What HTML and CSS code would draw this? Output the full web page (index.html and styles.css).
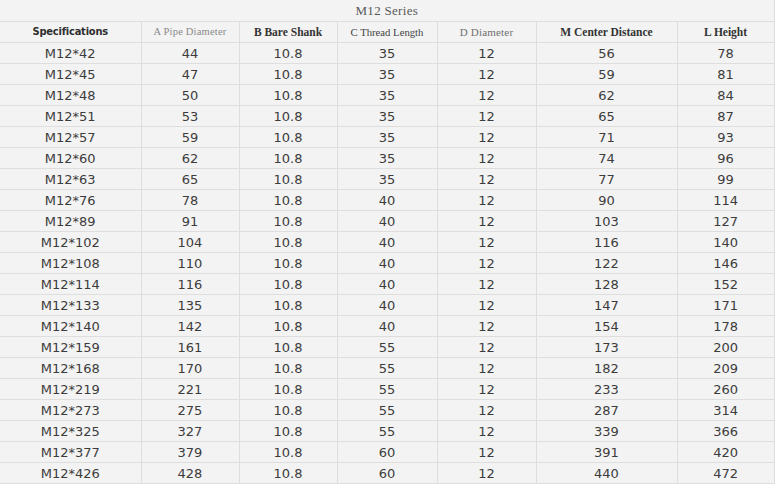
FILE: index.html
```html
<!DOCTYPE html>
<html>
<head>
<meta charset="utf-8">
<link rel="stylesheet" href="styles.css">
</head>
<body>
<table class="spec">
  <colgroup>
    <col class="c1"><col class="c2"><col class="c3"><col class="c4"><col class="c5"><col class="c6"><col class="c7">
  </colgroup>
  <thead>
    <tr class="title-row"><th colspan="7" class="title">M12 Series</th></tr>
    <tr class="head-row">
      <th class="h-spec">Specifications</th>
      <th class="h-light">A Pipe Diameter</th>
      <th class="h-bold">B Bare Shank</th>
      <th class="h-mid">C Thread Length</th>
      <th class="h-light h-d">D Diameter</th>
      <th class="h-bold">M Center Distance</th>
      <th class="h-bold">L Height</th>
    </tr>
  </thead>
  <tbody>
    <tr><td>M12*42</td><td>44</td><td>10.8</td><td>35</td><td>12</td><td>56</td><td>78</td></tr>
    <tr><td>M12*45</td><td>47</td><td>10.8</td><td>35</td><td>12</td><td>59</td><td>81</td></tr>
    <tr><td>M12*48</td><td>50</td><td>10.8</td><td>35</td><td>12</td><td>62</td><td>84</td></tr>
    <tr><td>M12*51</td><td>53</td><td>10.8</td><td>35</td><td>12</td><td>65</td><td>87</td></tr>
    <tr><td>M12*57</td><td>59</td><td>10.8</td><td>35</td><td>12</td><td>71</td><td>93</td></tr>
    <tr><td>M12*60</td><td>62</td><td>10.8</td><td>35</td><td>12</td><td>74</td><td>96</td></tr>
    <tr><td>M12*63</td><td>65</td><td>10.8</td><td>35</td><td>12</td><td>77</td><td>99</td></tr>
    <tr><td>M12*76</td><td>78</td><td>10.8</td><td>40</td><td>12</td><td>90</td><td>114</td></tr>
    <tr><td>M12*89</td><td>91</td><td>10.8</td><td>40</td><td>12</td><td>103</td><td>127</td></tr>
    <tr><td>M12*102</td><td>104</td><td>10.8</td><td>40</td><td>12</td><td>116</td><td>140</td></tr>
    <tr><td>M12*108</td><td>110</td><td>10.8</td><td>40</td><td>12</td><td>122</td><td>146</td></tr>
    <tr><td>M12*114</td><td>116</td><td>10.8</td><td>40</td><td>12</td><td>128</td><td>152</td></tr>
    <tr><td>M12*133</td><td>135</td><td>10.8</td><td>40</td><td>12</td><td>147</td><td>171</td></tr>
    <tr><td>M12*140</td><td>142</td><td>10.8</td><td>40</td><td>12</td><td>154</td><td>178</td></tr>
    <tr><td>M12*159</td><td>161</td><td>10.8</td><td>55</td><td>12</td><td>173</td><td>200</td></tr>
    <tr><td>M12*168</td><td>170</td><td>10.8</td><td>55</td><td>12</td><td>182</td><td>209</td></tr>
    <tr><td>M12*219</td><td>221</td><td>10.8</td><td>55</td><td>12</td><td>233</td><td>260</td></tr>
    <tr><td>M12*273</td><td>275</td><td>10.8</td><td>55</td><td>12</td><td>287</td><td>314</td></tr>
    <tr><td>M12*325</td><td>327</td><td>10.8</td><td>55</td><td>12</td><td>339</td><td>366</td></tr>
    <tr><td>M12*377</td><td>379</td><td>10.8</td><td>60</td><td>12</td><td>391</td><td>420</td></tr>
    <tr><td>M12*426</td><td>428</td><td>10.8</td><td>60</td><td>12</td><td>440</td><td>472</td></tr>
  </tbody>
</table>
</body>
</html>
```
FILE: styles.css
```css
html, body {
  margin: 0;
  padding: 0;
  background: #ffffff;
}
.spec {
  border-collapse: collapse;
  table-layout: fixed;
  width: 774px;
  background: #f3f3f3;
  font-family: "DejaVu Sans", Verdana, sans-serif;
  font-size: 13px;
  color: #3c3c3c;
}
.c1 { width: 141px; }
.c2 { width: 98px; }
.c3 { width: 98px; }
.c4 { width: 100px; }
.c5 { width: 99px; }
.c6 { width: 141px; }
.c7 { width: 97px; }
.spec th, .spec td {
  border: 1px solid #dedede;
  padding: 0;
  height: 20px;
  text-align: center;
  vertical-align: middle;
  line-height: 20px;
  overflow: hidden;
  white-space: nowrap;
}
.spec tr > :first-child { border-left: none; }
.spec .title-row th { border-top: none; height: 21px; line-height: 21px; }
.spec td { padding-top: 1px; height: 19px; line-height: 19px; }
.title {
  font-family: "Liberation Serif", "DejaVu Serif", serif;
  font-weight: normal;
  font-size: 13px;
  letter-spacing: 0.3px;
  color: #5a5a5a;
  padding-left: 24px;
}
.h-spec {
  font-family: "DejaVu Sans Condensed", "DejaVu Sans", sans-serif;
  font-weight: bold;
  font-size: 11px;
  color: #2e2e2e;
  letter-spacing: -0.2px;
}
.h-light {
  font-family: "Liberation Serif", serif;
  font-weight: normal;
  font-size: 10.5px;
  letter-spacing: 0.2px;
  color: #8a8a8a;
}
.h-d {
  font-size: 11px;
  color: #707070;
}
.h-mid {
  font-family: "Liberation Serif", serif;
  font-weight: normal;
  font-size: 10.7px;
  color: #444444;
}
.h-bold {
  font-family: "Liberation Serif", serif;
  font-weight: bold;
  font-size: 11.5px;
  color: #333333;
}
```
